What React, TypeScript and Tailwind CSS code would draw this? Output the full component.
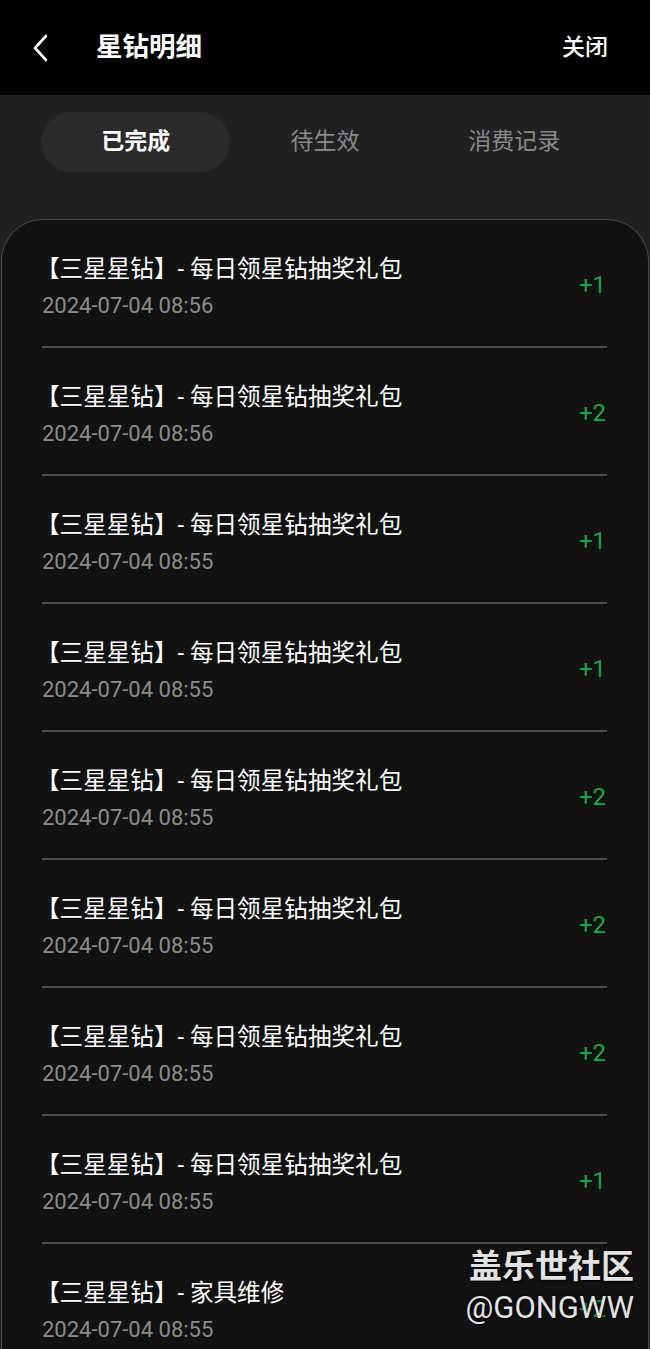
import React from "react";

type Row = { title: string; date: string; amount: string };

const rows: Row[] = [
  { title: "【三星星钻】- 每日领星钻抽奖礼包", date: "2024-07-04 08:56", amount: "+1" },
  { title: "【三星星钻】- 每日领星钻抽奖礼包", date: "2024-07-04 08:56", amount: "+2" },
  { title: "【三星星钻】- 每日领星钻抽奖礼包", date: "2024-07-04 08:55", amount: "+1" },
  { title: "【三星星钻】- 每日领星钻抽奖礼包", date: "2024-07-04 08:55", amount: "+1" },
  { title: "【三星星钻】- 每日领星钻抽奖礼包", date: "2024-07-04 08:55", amount: "+2" },
  { title: "【三星星钻】- 每日领星钻抽奖礼包", date: "2024-07-04 08:55", amount: "+2" },
  { title: "【三星星钻】- 每日领星钻抽奖礼包", date: "2024-07-04 08:55", amount: "+2" },
  { title: "【三星星钻】- 每日领星钻抽奖礼包", date: "2024-07-04 08:55", amount: "+1" },
  { title: "【三星星钻】- 家具维修", date: "2024-07-04 08:55", amount: "+2" },
];

export default function App() {
  return (
    <div className="relative w-[650px] h-[1349px] overflow-hidden bg-[#212121] font-['Roboto','Noto_Sans_CJK_SC',sans-serif]">
      {/* Header */}
      <div className="h-[95px] bg-black flex items-center pl-[30px] pr-[42px]">
        <svg width="22" height="30" viewBox="0 0 22 30" className="mr-[44px]">
          <path d="M16 3 L5 15 L16 27" fill="none" stroke="#ffffff" strokeWidth="2.6" strokeLinecap="round" strokeLinejoin="round" />
        </svg>
        <div className="text-white text-[26.5px] font-bold leading-none">星钻明细</div>
        <div className="ml-auto text-white text-[23px] font-medium leading-none">关闭</div>
      </div>

      {/* Tabs */}
      <div className="px-[41px] pt-[17px] pb-[47px] grid grid-cols-3">
        <div className="h-[60px] rounded-full bg-[#2a2a2a] flex items-center justify-center text-white text-[23px] font-bold">
          已完成
        </div>
        <div className="h-[60px] flex items-center justify-center text-[#8a8a8a] text-[23px]">待生效</div>
        <div className="h-[60px] flex items-center justify-center text-[#8a8a8a] text-[23px]">消费记录</div>
      </div>

      {/* Card */}
      <div className="mx-[1px] rounded-t-[42px] border border-b-0 border-[#4a4a4a] bg-[#121212] pl-[40px] pr-[41px] h-[1300px]">
        {rows.map((r, i) => (
          <div key={i} className="border-b-2 border-[#4e4e4e] pt-[34px] pb-[25px] flex items-center">
            <div className="flex-1 flex flex-col gap-[7px]">
              <div className="text-white text-[23.6px] leading-[30px] -ml-[6px]">{r.title}</div>
              <div className="text-[#8c8c8c] text-[22px] leading-[30px]">{r.date}</div>
            </div>
            <div className="text-[#22a247] text-[24px] leading-none pr-[1px] -mt-[6px]">{r.amount}</div>
          </div>
        ))}
      </div>

      {/* Watermark */}
      <div className="absolute right-[16px] top-[1244px] flex flex-col items-end text-[#e2e2e2] [text-shadow:1px_1px_2px_rgba(0,0,0,0.9),0_0_3px_rgba(0,0,0,0.8)]">
        <div className="text-[33px] font-bold leading-[40px] font-['Noto_Sans_CJK_SC',sans-serif]">盖乐世社区</div>
        <div className="text-[31px] leading-[40px] mt-[4px] font-['Roboto',sans-serif]">@GONGWW</div>
      </div>
    </div>
  );
}
